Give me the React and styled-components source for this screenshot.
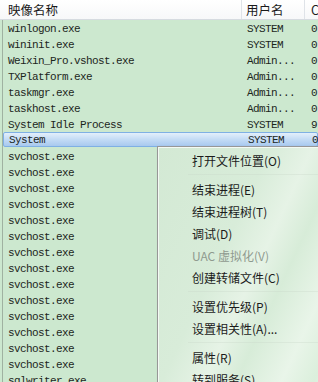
import React from 'react'
import styled, { createGlobalStyle } from 'styled-components'

const Global = createGlobalStyle`
    html, body {
        margin: 0;
        padding: 0;
        width: 318px;
        height: 382px;
        overflow: hidden;
        background: #cce8cf;
    }
`

const Window = styled.div`
    position: relative;
    width: 318px;
    height: 382px;
    overflow: hidden;
    background-color: #cce8cf;
`

const Header = styled.div`
    display: grid;
    grid-template-columns: 242px 63px 40px;
    height: 19px;
    border-bottom: 1px solid #d6dbe0;
    background: linear-gradient(#ffffff, #f7f8f9);
`

const HeaderCell = styled.div`
    display: flex;
    align-items: center;
    padding-left: ${p => p.pad}px;
    border-right: 1px solid #dfe3e8;
    font-family: "Noto Sans CJK SC", sans-serif;
    font-size: 12.5px;
    color: #1a1a1a;
    white-space: nowrap;
    overflow: hidden;
`

const Body = styled.div`
    display: flex;
    flex-direction: column;
    margin-left: 2px;
    border-left: 1px solid #9fb2a1;
    height: 362px;
    overflow: hidden;
`

const Row = styled.div`
    display: grid;
    grid-template-columns: 239px 63px 40px;
    flex-shrink: 0;
    height: 16px;
    align-items: center;
    box-sizing: border-box;
    font-family: "Liberation Mono", monospace;
    font-size: 11px;
    letter-spacing: -0.6px;
    color: #1c261c;
    white-space: nowrap;
    padding-top: 2px;
    ${p => p.selected && `
        height: 15px;
        margin-bottom: 1px;
        border: 1px solid #7fb0e4;
        border-radius: 2px;
        padding-top: 1px;
        background: linear-gradient(#e3effb, #c3dbf5 50%, #a8c9ef);
    `}
`

const Cell = styled.span`
    padding-left: ${p => p.pad}px;
    overflow: hidden;
`

const Menu = styled.div`
    position: absolute;
    left: 157px;
    top: 146px;
    width: 200px;
    height: 260px;
    padding: 2px 0;
    border: 1px solid #979797;
    box-shadow: inset 0 0 0 1px #f4faf4, 2px 2px 3px rgba(0,0,0,0.25);
    background: linear-gradient(115deg, #d3e9d4 0%, #d8ecd9 35%, #e6f3e6 48%, #d7ecd8 58%, #e9f5e9 72%, #dbefdc 82%, #eaf6ea 92%, #d8edd9 100%);
    font-family: "Noto Sans CJK SC", sans-serif;
    font-size: 12px;
`

const MenuItem = styled.div`
    display: flex;
    align-items: center;
    height: 22px;
    padding-left: 34px;
    color: ${p => p.disabled ? '#8f9a8f' : '#1b1b1b'};
    white-space: nowrap;
`

const Separator = styled.div`
    height: 1px;
    margin: 3px 2px 3px 30px;
    background: rgba(200, 215, 200, 0.35);
`

// rows after "System" sit under the context menu, so only their names show
const rows = [
    ['winlogon.exe', 'SYSTEM', '0'],
    ['wininit.exe', 'SYSTEM', '0'],
    ['Weixin_Pro.vshost.exe', 'Admin...', '0'],
    ['TXPlatform.exe', 'Admin...', '0'],
    ['taskmgr.exe', 'Admin...', '0'],
    ['taskhost.exe', 'Admin...', '0'],
    ['System Idle Process', 'SYSTEM', '9'],
    ['System', 'SYSTEM', '0'],
    ...Array.from({ length: 14 }, () => ['svchost.exe']),
    ['sqlwriter.exe'],
]

const menu = [
    '打开文件位置(O)',
    '-',
    '结束进程(E)',
    '结束进程树(T)',
    '调试(D)',
    '!UAC 虚拟化(V)',
    '创建转储文件(C)',
    '-',
    '设置优先级(P)',
    '设置相关性(A)...',
    '-',
    '属性(R)',
    '转到服务(S)',
]

export default function App() {
    return (
        <Window>
            <Global />
            <Header>
                <HeaderCell pad={8}>映像名称</HeaderCell>
                <HeaderCell pad={4}>用户名</HeaderCell>
                <HeaderCell pad={6}>CPU</HeaderCell>
            </Header>
            <Body>
                {rows.map((r, i) => (
                    <Row key={i} selected={r[0] === 'System'}>
                        <Cell pad={5}>{r[0]}</Cell>
                        <Cell pad={5}>{r[1]}</Cell>
                        <Cell pad={6}>{r[2]}</Cell>
                    </Row>
                ))}
            </Body>
            <Menu>
                {menu.map((m, i) => m === '-'
                    ? <Separator key={i} />
                    : <MenuItem key={i} disabled={m[0] === '!'}>{m.replace('!', '')}</MenuItem>
                )}
            </Menu>
        </Window>
    )
}
